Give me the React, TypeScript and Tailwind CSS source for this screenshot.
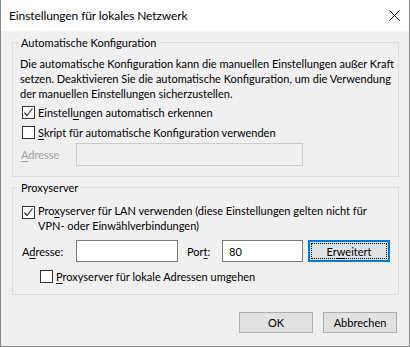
import React from "react";

function CheckBox({ checked }: { checked?: boolean }) {
  return (
    <span className="w-[13px] h-[13px] shrink-0 border border-[#333333] bg-white flex items-center justify-center">
      {checked && (
        <svg width="11" height="11" viewBox="0 0 11 11">
          <path d="M1.5 5.5 L4 8.5 L9.5 1.5" fill="none" stroke="#333333" strokeWidth="1.2" />
        </svg>
      )}
    </span>
  );
}

function DialogButton({ label }: { label: React.ReactNode }) {
  return (
    <button className="w-[74px] h-[21px] border border-[#adadad] bg-[#e1e1e1] flex items-center justify-center">
      {label}
    </button>
  );
}

export default function App() {
  return (
    <div className="w-[410px] h-[347px] border-x border-b border-[#888888] bg-[#f0f0f0] flex flex-col text-[11px] leading-[15px] text-black font-['Lato','Liberation_Sans',sans-serif]">
      {/* title bar */}
      <div className="h-[31px] shrink-0 bg-white flex items-center justify-between pl-[8px] pr-[9px]">
        <span className="text-[12px] tracking-[-0.1px]">Einstellungen für lokales Netzwerk</span>
        <svg width="11" height="11" viewBox="0 0 11 11">
          <path d="M0.5 0.5 L10.5 10.5 M10.5 0.5 L0.5 10.5" stroke="#000000" strokeWidth="1" />
        </svg>
      </div>

      {/* Automatische Konfiguration */}
      <fieldset className="mt-[4px] ml-[11px] w-[387px] border border-[#dcdcdc]">
        <legend className="ml-[5px] px-[3px] leading-[15px]">Automatische Konfiguration</legend>
        <div className="pl-[7px] pt-[6px] pb-[10px]">
          <p className="whitespace-nowrap">
            Die automatische Konfiguration kann die manuellen Einstellungen außer Kraft
            <br />
            setzen. Deaktivieren Sie die automatische Konfiguration, um die Verwendung
            <br />
            der manuellen Einstellungen sicherzustellen.
          </p>
          <div className="mt-[4px] ml-[2px] flex items-center gap-[3px]">
            <CheckBox checked />
            <span>
              Einstell<u className="underline-offset-2">u</u>ngen automatisch erkennen
            </span>
          </div>
          <div className="mt-[5px] ml-[2px] flex items-center gap-[3px]">
            <CheckBox />
            <span>
              <u className="underline-offset-2">S</u>kript für automatische Konfiguration verwenden
            </span>
          </div>
          <div className="mt-[3px] flex items-center">
            <span className="w-[56px] pl-[1px] text-[#a0a0a0]">
              <u className="underline-offset-2">A</u>dresse
            </span>
            <div className="w-[227px] h-[23px] border border-[#cccccc] bg-[#f0f0f0]" />
          </div>
        </div>
      </fieldset>

      {/* Proxyserver */}
      <fieldset className="mt-[3px] ml-[11px] w-[387px] border border-[#dcdcdc]">
        <legend className="ml-[5px] px-[3px] leading-[15px]">Proxyserver</legend>
        <div className="pl-[7px] pt-[8px] pb-[10px]">
          <div className="ml-[2px] flex items-start gap-[3px]">
            <span className="mt-[3px]">
              <CheckBox checked />
            </span>
            <span className="whitespace-nowrap">
              Pro<u className="underline-offset-2">x</u>yserver für LAN verwenden (diese Einstellungen gelten nicht für
              <br />
              VPN- oder Einwählverbindungen)
            </span>
          </div>
          <div className="mt-[7px] flex items-center">
            <span className="w-[56px] pl-[2px]">
              A<u className="underline-offset-2">d</u>resse:
            </span>
            <div className="w-[102px] h-[22px] border border-[#7a7a7a] bg-white" />
            <span className="ml-[9px] w-[35px]">
              Por<u className="underline-offset-2">t</u>:
            </span>
            <div className="w-[81px] h-[22px] border border-[#7a7a7a] bg-white flex items-center pl-[6px]">
              80
            </div>
            <button className="ml-[5px] w-[82px] h-[22px] border-2 border-[#0078d7] bg-[#e1e1e1] p-[1px]">
              <span className="w-full h-full border border-dotted border-black flex items-center justify-center">
                Er<u className="underline-offset-2">w</u>eitert
              </span>
            </button>
          </div>
          <div className="mt-[7px] ml-[20px] flex items-center gap-[3px]">
            <CheckBox />
            <span>
              <u className="underline-offset-2">P</u>roxyserver für lokale Adressen umgehen
            </span>
          </div>
        </div>
      </fieldset>

      {/* dialog buttons */}
      <div className="mt-[17px] pr-[12px] flex justify-end gap-[10px]">
        <DialogButton label="OK" />
        <DialogButton label="Abbrechen" />
      </div>
    </div>
  );
}
